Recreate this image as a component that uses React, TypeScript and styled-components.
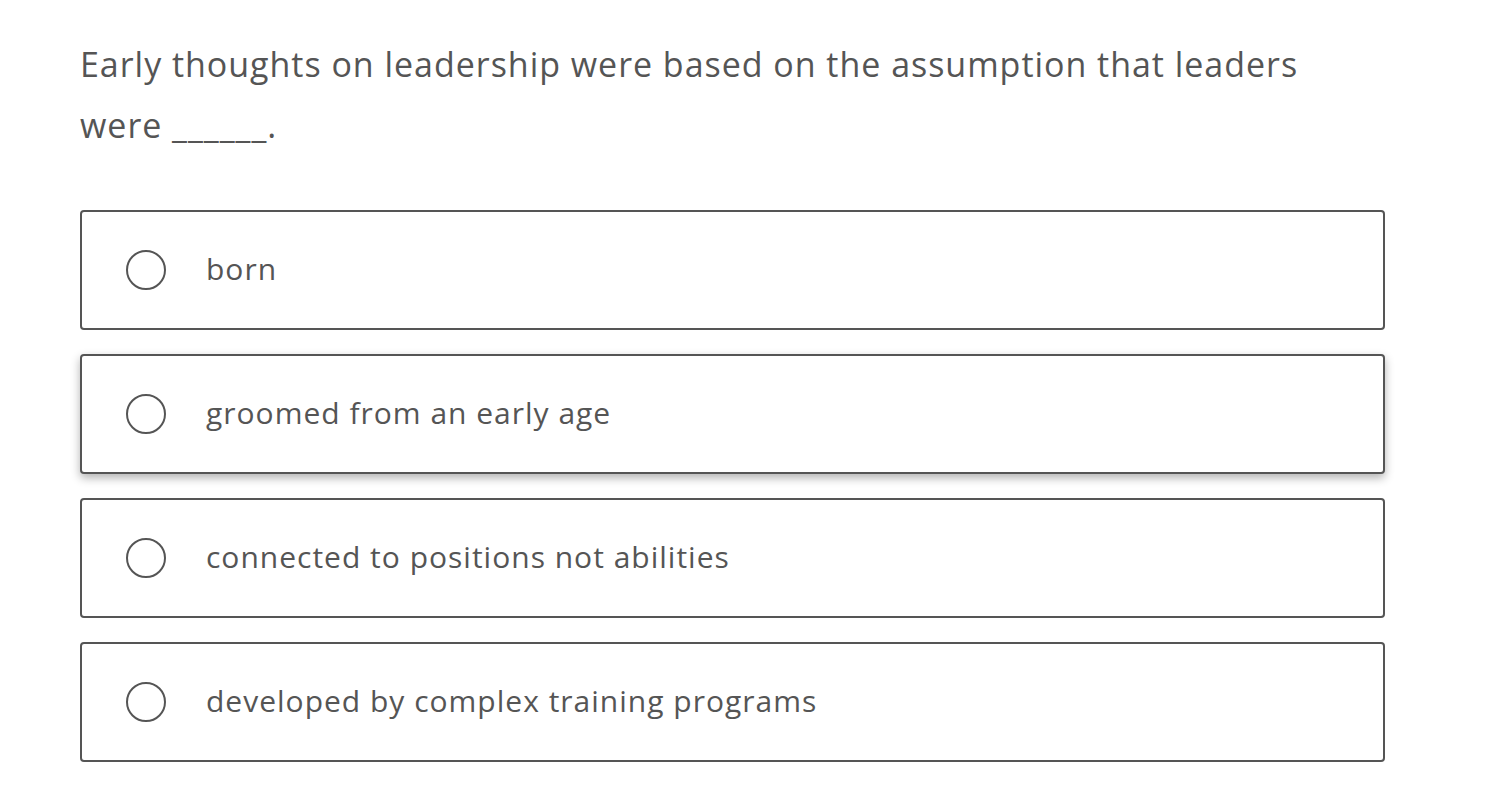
import React from "react";
import styled, { createGlobalStyle } from "styled-components";

const Global = createGlobalStyle`
  html, body { margin: 0; padding: 0; background: #fff; }
  body { font-family: "Open Sans", "Noto Sans", sans-serif; color: #555; }
`;

const Page = styled.div`
  padding: 34px 115px 0 80px;
  width: 1500px;
  box-sizing: border-box;
`;

const Question = styled.p`
  margin: 0;
  font-size: 34px;
  line-height: 61px;
  letter-spacing: 0.97px;
  color: #555;
  max-width: 1260px;
`;

const Options = styled.div`
  margin-top: 54px;
  display: flex;
  flex-direction: column;
  gap: 24px;
  width: 1305px;
`;

const Option = styled.label<{ $hover?: boolean }>`
  display: flex;
  align-items: center;
  height: 120px;
  box-sizing: border-box;
  border: 2px solid #555;
  border-radius: 4px;
  background: #fff;
  padding-left: 44px;
  gap: 40px;
  box-shadow: ${(p) => (p.$hover ? "0 4px 10px rgba(0,0,0,0.3)" : "none")};
`;

const Radio = styled.span`
  width: 40px;
  height: 40px;
  box-sizing: border-box;
  border: 2px solid #555;
  border-radius: 50%;
  flex: none;
`;

const OptionText = styled.span`
  font-size: 30px;
  line-height: 40px;
  letter-spacing: 1px;
  color: #555;
  margin-top: -2px;
`;

const options = [
  "born",
  "groomed from an early age",
  "connected to positions not abilities",
  "developed by complex training programs",
];

export default function App() {
  return (
    <Page>
      <Global />
      <Question>
        Early thoughts on leadership were based on the assumption that leaders were ______.
      </Question>
      <Options>
        {options.map((o, i) => (
          <Option key={o} $hover={i === 1}>
            <Radio />
            <OptionText>{o}</OptionText>
          </Option>
        ))}
      </Options>
    </Page>
  );
}
